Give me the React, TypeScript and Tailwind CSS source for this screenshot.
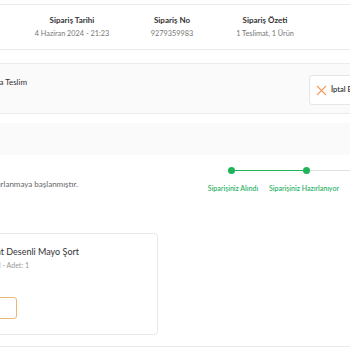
import React from "react";

function Clip({ w, children, className }: { w: string; children: React.ReactNode; className: string }) {
  return (
    <div className={`${w} overflow-hidden flex justify-end shrink-0`}>
      <span className={`${className} whitespace-nowrap shrink-0`}>{children}</span>
    </div>
  );
}

export default function App() {
  return (
    <div className="w-[350px] h-[350px] overflow-hidden bg-white font-['Lato',sans-serif] text-[#333]">
      <div className="h-[4px]" />
      {/* header */}
      <div className="h-[46px] border-y border-[#ebebeb] flex items-center">
        <div className="w-[22px]" />
        <div className="w-[100px] flex flex-col items-center leading-[13px]">
          <span className="text-[8px] font-bold text-[#333]">Sipariş Tarihi</span>
          <span className="text-[7.3px] text-[#777]">4 Haziran 2024 - 21:23</span>
        </div>
        <div className="w-[100px] flex flex-col items-center leading-[13px]">
          <span className="text-[8px] font-bold text-[#333]">Sipariş No</span>
          <span className="text-[7.3px] text-[#777]">9279359983</span>
        </div>
        <div className="w-[86px] flex flex-col items-center leading-[13px]">
          <span className="text-[8px] font-bold text-[#333]">Sipariş Özeti</span>
          <span className="text-[7.3px] text-[#777]">1 Teslimat, 1 Ürün</span>
        </div>
      </div>
      <div className="h-[13px]" />
      {/* teslim section */}
      <div className="h-[51px] border-y border-[#ebebeb] bg-[#fafafa] flex items-start justify-between">
        <div className="pt-[13px]">
          <Clip w="w-[27px]" className="text-[8px] leading-[10px] text-[#333]">Kargoya Teslim</Clip>
        </div>
        <div className="mt-[11px] h-[30px] w-[50px] mr-[-9px] bg-white border border-[#e6e6e6] rounded-[3px] flex items-center pl-[6px] gap-[4px] shrink-0">
          <svg width="11" height="11" viewBox="0 0 11 11">
            <path d="M1 1 L10 10 M10 1 L1 10" stroke="#f29a5e" strokeWidth="1.1" fill="none" />
          </svg>
          <span className="text-[7.5px] font-semibold text-[#333] whitespace-nowrap">İptal Et</span>
        </div>
      </div>
      <div className="h-[9px]" />
      <div className="h-[32px] bg-[#fafafa]" />
      {/* progress */}
      <div className="h-[78px] flex items-start justify-between">
        <div className="pt-[24px]">
          <Clip w="w-[78px]" className="text-[8px] leading-[10px] text-[#666]">Siparişiniz hazırlanmaya başlanmıştır.</Clip>
        </div>
        <div className="w-[148px] pt-[12px] flex flex-col">
          <div className="flex items-center pl-[26px]">
            <div className="w-[7px] h-[7px] rounded-full bg-[#1fb35a] shrink-0" />
            <div className="w-[68px] h-[1.5px] bg-[#1fb35a]" />
            <div className="w-[7px] h-[7px] rounded-full bg-[#1fb35a] shrink-0" />
            <div className="flex-1 h-[1px] bg-[#e0e0e0]" />
          </div>
          <div className="flex items-center mt-[9px] whitespace-nowrap leading-[10px]">
            <div className="w-[62px] flex justify-center">
              <span className="text-[7px] font-semibold text-[#2fb36a]">Siparişiniz Alındı</span>
            </div>
            <div className="w-[86px] flex justify-start pl-[5px]">
              <span className="text-[7px] font-semibold text-[#2fb36a]">Siparişiniz Hazırlanıyor</span>
            </div>
          </div>
        </div>
      </div>
      {/* card */}
      <div className="h-[102px] w-[170px] ml-[-12px] border border-[#e8e8e8] rounded-[4px] flex flex-col items-start overflow-hidden">
        <div className="pt-[12px] flex flex-col items-start">
          <Clip w="w-[90px]" className="text-[9px] leading-[12px] text-[#333]">Print Desenli Mayo Şort</Clip>
          <div className="mt-[3px]">
            <Clip w="w-[40px]" className="text-[7px] leading-[9px] text-[#999]">Beden: M - Adet: 1</Clip>
          </div>
        </div>
        <div className="mt-[27px] w-[28px] h-[22px] border border-[#e8b874] rounded-[3px]" />
      </div>
      <div className="h-[11px]" />
      <div className="h-[1px] bg-[#ebebeb]" />
    </div>
  );
}
